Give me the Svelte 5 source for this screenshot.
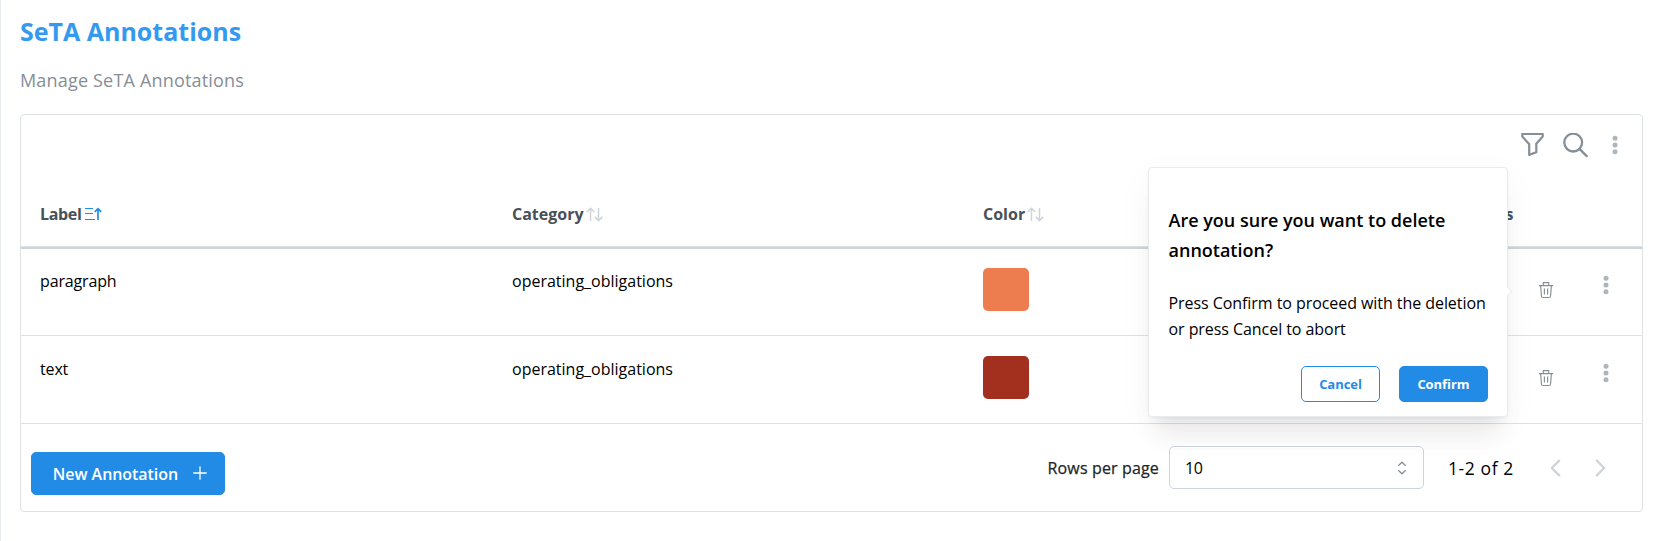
<script>
  const columns = [
    { name: 'Label', sort: 'asc', spacing: -0.35 },
    { name: 'Category', sort: 'none', spacing: 0 },
    { name: 'Color', sort: 'none', spacing: 0 },
    { name: 'Actions', sort: null, spacing: 0 }
  ];
  const rows = [
    { label: 'paragraph', category: 'operating_obligations', color: '#ed7d4f' },
    { label: 'text', category: 'operating_obligations', color: '#a3301e' }
  ];
</script>

{#snippet dots()}
  <svg class="dots" width="6" height="20" viewBox="0 0 6 20" fill="#adb5bd">
    <circle cx="3" cy="3.3" r="2.5" /><circle cx="3" cy="10" r="2.5" /><circle cx="3" cy="16.7" r="2.5" />
  </svg>
{/snippet}

<main>
  <h1>SeTA Annotations</h1>
  <p class="subtitle">Manage SeTA Annotations</p>

  <section class="card">
    <div class="toolbar">
      <svg width="24" height="24" viewBox="0 0 24 24" fill="none" stroke="#868e96" stroke-width="2.2" stroke-linejoin="round">
        <path d="M1.3 1h20.4v2.6l-6.4 7.2v8.4L8.2 21.9V11.2L1.3 3.6z" />
      </svg>
      <svg width="26" height="26" viewBox="0 0 26 26" fill="none" stroke="#868e96" stroke-width="2.3" stroke-linecap="round">
        <circle cx="10.2" cy="9.6" r="8.9" /><path d="M16.5 15.9l7.2 7.2" />
      </svg>
      {@render dots()}
    </div>

    <div class="grid head">
      {#each columns as col}
        <div class="th">
          <span style:letter-spacing="{col.spacing}px">{col.name}</span>
          {#if col.sort === 'asc'}
            <svg class="asc" width="17" height="15" viewBox="0 0 17 15" fill="none" stroke="#228be6">
              <path stroke-width="1.2" d="M0 1.5h8M0 6.5h8M0 12.5h10" />
              <path stroke-width="1.7" d="M13 13V1.8M9.8 4.9L13 1.6l3.2 3.3" />
            </svg>
          {:else if col.sort === 'none'}
            <svg width="17" height="15" viewBox="0 0 17 15" fill="none" stroke="#ced4da" stroke-width="1.5">
              <path d="M4.5 14V1.2M.7 5l3.8-3.8L8.3 5M12.5 1v12.6M8.8 9.9l3.7 3.7 3.8-3.7" />
            </svg>
          {/if}
        </div>
      {/each}
    </div>

    {#each rows as row}
      <div class="grid row">
        <div class="td">{row.label}</div>
        <div class="td">{row.category}</div>
        <div class="td"><span class="swatch" style:background={row.color}></span></div>
        <div class="td actions">
          <svg class="trash" width="16" height="18" viewBox="0 0 16 18" fill="none" stroke="#868e96" stroke-width="1.15">
            <path d="M1 4.6h14M5.3 4.6V1.6h5.4v3M2.6 4.8l.9 10.4q.1 1.3 1.4 1.3h6.2q1.3 0 1.4-1.3l.9-10.4M6.4 7.4v6M9.6 7.4v6" />
          </svg>
          {@render dots()}
        </div>
      </div>
    {/each}

    <div class="footer">
      <button class="new">
        New Annotation
        <svg width="14" height="14" viewBox="0 0 14 14" stroke="#fff" stroke-width="1.3" stroke-linecap="round"><path d="M.8 7h12.4M7 .8v12.4" /></svg>
      </button>
      <div class="pager">
        <span class="rpp">Rows per page</span>
        <div class="select">
          <span>10</span>
          <svg width="10" height="14" viewBox="0 0 10 14" fill="none" stroke="#868e96" stroke-width="1.2"><path d="M1.3 4.8L5 1.2l3.7 3.6M1.3 9.2L5 12.8l3.7-3.6" /></svg>
        </div>
        <span class="range">1-2 of 2</span>
        <svg class="prev" width="11" height="18" viewBox="0 0 11 18" fill="none" stroke="#ced4da" stroke-width="2.3" stroke-linecap="round" stroke-linejoin="round"><path d="M9.2 1.6L1.8 9l7.4 7.4" /></svg>
        <svg width="11" height="18" viewBox="0 0 11 18" fill="none" stroke="#ced4da" stroke-width="2.3" stroke-linecap="round" stroke-linejoin="round"><path d="M1.8 1.6L9.2 9l-7.4 7.4" /></svg>
      </div>
    </div>
  </section>

  <div class="popover" role="dialog">
    <h2>Are you sure you want to delete annotation?</h2>
    <p>Press Confirm to proceed with the deletion or press Cancel to abort</p>
    <div class="buttons">
      <button class="cancel">Cancel</button>
      <button class="confirm">Confirm</button>
    </div>
    <span class="arrow"></span>
  </div>
</main>

<style>
  :global(body) { background: #fff; }
  * { box-sizing: border-box; }
  svg { display: block; flex: none; }
  main {
    position: relative; height: 541px; overflow: hidden;
    padding: 15px 16px 0 19px; border-left: 1px solid #e9ecef;
    font: 16px/24px "Open Sans", "Noto Sans", sans-serif; color: #000;
  }
  h1 { margin: 0; font-size: 25px; line-height: 32px; font-weight: 700; color: #339af0; }
  .subtitle { margin: 19px 0 0; font-size: 18px; line-height: 28px; letter-spacing: .18px; color: #868e96; }
  .card { margin-top: 20px; height: 398px; border: 1px solid #dee2e6; border-radius: 4px; }
  .toolbar { height: 69px; padding: 18px 24px 0 0; display: flex; justify-content: flex-end; }
  .toolbar svg:nth-child(2) { margin-left: 18px; }
  .toolbar .dots { margin: 2px 0 0 23px; }
  .grid { display: grid; grid-template-columns: repeat(3, 471px) 1fr; }
  .head { height: 65px; border-bottom: 2px solid #ced4da; box-shadow: inset 0 -1px #dee2e6; }
  .th { padding: 18px 0 0 20px; display: flex; gap: 2px; font-weight: 700; color: #495057; }
  .th:first-child, .td:first-child { padding-left: 19px; }
  .th svg { margin-top: 5px; }
  .th .asc { margin-left: 2px; }
  .row { height: 88px; border-bottom: 1px solid #dee2e6; }
  .head + .row { height: 87px; }
  .row + .row { padding-top: 1px; }
  .td { padding: 20px 0 0 20px; }
  .td:first-child { letter-spacing: -.15px; }
  .swatch { display: block; width: 46px; height: 43px; margin-top: -1px; border-radius: 5px; }
  .actions { display: flex; padding: 26px 33px 0 0; justify-content: flex-end; }
  .actions .dots { margin-left: 49px; }
  .trash { margin-top: 6px; }
  .footer { display: flex; justify-content: space-between; align-items: flex-start; padding: 22px 36px 0 10px; }
  button { font: 600 16px/24px "Open Sans", "Noto Sans", sans-serif; border: 1px solid #228be6; border-radius: 5px; background: #228be6; color: #fff; padding: 0; display: flex; align-items: center; justify-content: center; white-space: nowrap; }
  .new { margin-top: 6px; width: 194px; height: 43px; padding-left: 4px; gap: 15px; letter-spacing: -.05px; }
  .new svg { margin-top: -1px; }
  .pager { display: flex; align-items: center; height: 43px; }
  .rpp { font-weight: 500; letter-spacing: .15px; color: #212529; -webkit-text-stroke: .25px #212529; }
  .select { width: 255px; height: 43px; margin-left: 10px; padding: 0 16px 0 15px; display: flex; justify-content: space-between; align-items: center; border: 1px solid #ced4da; border-radius: 5px; letter-spacing: -.4px; }
  .range { width: 65px; margin-left: 24px; font-size: 17.5px; letter-spacing: .6px; white-space: nowrap; }
  .prev { margin: 0 34px 0 37px; }
  .popover {
    position: absolute; left: 1147px; top: 167px; width: 360px; height: 250px; padding: 37px 19px 0 19.5px;
    background: #fff; border: 1px solid #e9ecef; border-radius: 4px;
    box-shadow: 0 1px 3px rgba(0,0,0,.05), 0 28px 23px -7px rgba(0,0,0,.05), 0 12px 12px -7px rgba(0,0,0,.04), 0 10px 36px rgba(0,0,0,.04);
  }
  h2 { margin: 0; font-size: 18px; line-height: 30px; font-weight: 600; }
  .popover p { margin: 25px 0 0; line-height: 26px; letter-spacing: -.06px; }
  .buttons { display: flex; justify-content: flex-end; gap: 19px; margin-top: 24px; }
  .buttons button { height: 36px; font-size: 13px; font-weight: 700; letter-spacing: -.05px; }
  .buttons .cancel { width: 79px; background: #fff; color: #228be6; }
  .confirm { width: 89px; }
  .arrow { position: absolute; right: -4px; top: 120px; width: 7px; height: 7px; background: #fff; border: solid #e9ecef; border-width: 1px 1px 0 0; transform: rotate(45deg); }
</style>
